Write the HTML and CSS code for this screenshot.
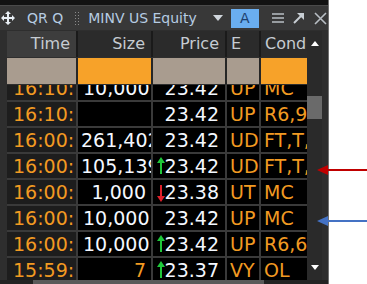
FILE: index.html
```html
<!DOCTYPE html>
<html lang="en">
<head>
    <meta charset="UTF-8">
    <meta name="viewport" content="width=device-width, initial-scale=1.0">
    <title>MINV US Equity - QR</title>
    <link rel="stylesheet" href="styles.css">
</head>
<body>
    <div class="window">
        <div class="top-edge"></div>

        <!-- Title bar -->
        <div class="titlebar">
            <svg class="move-icon" width="14" height="14" viewBox="0 0 14 14">
                <path d="M7 0 L10 3 H8 V6 H11 V4 L14 7 L11 10 V8 H8 V11 H10 L7 14 L4 11 H6 V8 H3 V10 L0 7 L3 4 V6 H6 V3 H4 Z" fill="#e8eef4"/>
            </svg>
            <span class="cmd">QR Q</span>
            <span class="grip"></span>
            <span class="security">MINV US Equity</span>
            <svg class="dropdown" width="10" height="6" viewBox="0 0 10 6">
                <path d="M0 0 H10 L5 6 Z" fill="#d0d6dc"/>
            </svg>
            <span class="btn-a">A</span>
            <svg class="tool" width="12" height="10" viewBox="0 0 12 10">
                <path d="M0 1 H12 M0 5 H12 M0 9 H12" stroke="#b8bec4" stroke-width="1.6"/>
            </svg>
            <svg class="tool" width="12" height="12" viewBox="0 0 12 12">
                <path d="M1 11 L10 2" stroke="#c8ced4" stroke-width="2"/>
                <path d="M4 1 H11 V8 Z" fill="#c8ced4"/>
            </svg>
            <svg class="tool" width="13" height="13" viewBox="0 0 13 13">
                <path d="M1 1 L12 12 M12 1 L1 12" stroke="#b8bec4" stroke-width="1.6"/>
            </svg>
        </div>

        <div class="panel">
            <div class="table">
                <div class="row head">
                    <div class="hcell sorted">Time</div>
                    <div class="hcell">Size</div>
                    <div class="hcell">Price</div>
                    <div class="hcell left">E</div>
                    <div class="hcell left">Cond</div>
                </div>
                <div class="row filter">
                    <div class="fcell"></div>
                    <div class="fcell on"></div>
                    <div class="fcell"></div>
                    <div class="fcell"></div>
                    <div class="fcell on"></div>
                </div>
                <div class="rows">
                    <div class="rows-inner">
                        <div class="row trade">
                            <div class="cell time">16:10:</div>
                            <div class="cell size">10,000</div>
                            <div class="cell price">23.42</div>
                            <div class="cell exch">UP</div>
                            <div class="cell cond">MC</div>
                        </div>
                        <div class="row trade">
                            <div class="cell time">16:10:</div>
                            <div class="cell size"></div>
                            <div class="cell price">23.42</div>
                            <div class="cell exch">UP</div>
                            <div class="cell cond">R6,9</div>
                        </div>
                        <div class="row trade">
                            <div class="cell time">16:00:</div>
                            <div class="cell size over">261,402</div>
                            <div class="cell price">23.42</div>
                            <div class="cell exch">UD</div>
                            <div class="cell cond">FT,T,</div>
                        </div>
                        <div class="row trade">
                            <div class="cell time">16:00:</div>
                            <div class="cell size over">105,139</div>
                            <div class="cell price"><span class="tick up"></span>23.42</div>
                            <div class="cell exch">UD</div>
                            <div class="cell cond">FT,T,</div>
                        </div>
                        <div class="row trade">
                            <div class="cell time">16:00:</div>
                            <div class="cell size">1,000</div>
                            <div class="cell price"><span class="tick down"></span>23.38</div>
                            <div class="cell exch">UT</div>
                            <div class="cell cond">MC</div>
                        </div>
                        <div class="row trade">
                            <div class="cell time">16:00:</div>
                            <div class="cell size">10,000</div>
                            <div class="cell price">23.42</div>
                            <div class="cell exch">UP</div>
                            <div class="cell cond">MC</div>
                        </div>
                        <div class="row trade">
                            <div class="cell time">16:00:</div>
                            <div class="cell size">10,000</div>
                            <div class="cell price"><span class="tick up"></span>23.42</div>
                            <div class="cell exch">UP</div>
                            <div class="cell cond">R6,6</div>
                        </div>
                        <div class="row trade">
                            <div class="cell time">15:59:</div>
                            <div class="cell size odd">7</div>
                            <div class="cell price"><span class="tick up"></span>23.37</div>
                            <div class="cell exch">VY</div>
                            <div class="cell cond">OL</div>
                        </div>
                    </div>
                </div>
            </div>

            <div class="vscroll">
                <div class="arrow-up"></div>
                <div class="vthumb"></div>
                <div class="arrow-down"></div>
            </div>
        </div>

        <div class="hscroll">
            <div class="hthumb"></div>
        </div>
    </div>

    <!-- callout arrows -->
    <svg class="callout red" width="50" height="12" viewBox="0 0 50 12">
        <path d="M10 6 H50" stroke="#c00000" stroke-width="2"/>
        <path d="M0 6 L11 1 V11 Z" fill="#c00000"/>
    </svg>
    <svg class="callout blue" width="50" height="12" viewBox="0 0 50 12">
        <path d="M10 6 H50" stroke="#4472c4" stroke-width="2"/>
        <path d="M0 6 L11 1 V11 Z" fill="#4472c4"/>
    </svg>
</body>
</html>
```

FILE: styles.css
```css
body {
    margin: 0;
    background-color: #ffffff;
    font-family: "DejaVu Sans", Verdana, sans-serif;
    position: relative;
    width: 367px;
    height: 284px;
    overflow: hidden;
}
.window {
    width: 328px;
    height: 284px;
    background-color: #2e2e2e;
    border-right: 1px solid #707070;
    display: flex;
    flex-direction: column;
}
.top-edge {
    height: 5px;
    background-color: #121212;
    border-bottom: 1px solid #4a4a4a;
}
.titlebar {
    height: 24px;
    background-color: #383838;
    display: flex;
    align-items: center;
    font-size: 14px;
    color: #b6cce2;
}
.move-icon {
    margin-left: 1px;
}
.cmd {
    margin-left: 12px;
}
.grip {
    width: 7px;
    height: 15px;
    margin-left: 11px;
    background-image: radial-gradient(#8a8a8a 0.8px, transparent 1px);
    background-size: 3px 3px;
}
.security {
    margin-left: 7px;
}
.dropdown {
    margin-left: 16px;
}
.btn-a {
    width: 28px;
    height: 19px;
    margin-left: 8px;
    background-color: #6aaef0;
    color: #1d3f6e;
    text-align: center;
    line-height: 19px;
}
.tool {
    margin-left: 9px;
}
.btn-a + .tool {
    margin-left: 13px;
}
.panel {
    flex: 1;
    display: flex;
    min-height: 0;
    padding-top: 1px;
}
.table {
    padding-left: 7px;
    display: flex;
    flex-direction: column;
    row-gap: 1px;
}
.row {
    display: grid;
    grid-template-columns: 69px 73px 72px 32px 46px;
    column-gap: 2px;
}
.head {
    height: 26px;
    background-color: #1a1a1a;
}
.hcell {
    background-color: #2b2b2b;
    color: #c6ccd2;
    font-size: 16px;
    line-height: 26px;
    text-align: right;
    padding-right: 6px;
    overflow: hidden;
    white-space: nowrap;
}
.hcell.sorted {
    background-color: #3d3d3d;
}
.hcell.left {
    text-align: left;
    padding: 0 0 0 4px;
}
.filter {
    height: 26px;
    background-color: #262626;
}
.fcell {
    background-color: #a99c8f;
}
.fcell.on {
    background-color: #f7a229;
}
.rows {
    height: 195px;
    overflow: hidden;
    background-color: #3a3a3a;
}
.rows-inner {
    margin-top: -9px;
    display: flex;
    flex-direction: column;
    row-gap: 2px;
}
.trade {
    height: 24px;
}
.cell {
    background-color: #000000;
    font-size: 19px;
    line-height: 24px;
    white-space: nowrap;
    overflow: hidden;
    padding: 0 5px;
    color: #f29a22;
}
.cell.time {
    background-color: #1d1d1d;
    padding-left: 6px;
}
.cell.size {
    color: #f4f8ff;
    text-align: right;
}
.cell.size.over {
    text-align: left;
    padding-left: 3px;
}
.cell.size.odd {
    color: #f29a22;
}
.cell.price {
    color: #f4f8ff;
    text-align: right;
    padding-right: 6px;
    position: relative;
}
.cell.exch {
    padding-left: 3px;
}
.cell.cond {
    padding-left: 3px;
}
.tick {
    position: absolute;
    left: 7px;
    top: 5px;
    width: 2px;
    height: 15px;
}
.tick.up {
    background-color: #1fc83a;
}
.tick.down {
    background-color: #e0202a;
}
.tick::before {
    content: "";
    position: absolute;
    left: -3px;
    border-left: 4px solid transparent;
    border-right: 4px solid transparent;
}
.tick.up::before {
    top: -2px;
    border-bottom: 6px solid #1fc83a;
}
.tick.down::before {
    bottom: -2px;
    border-top: 6px solid #e0202a;
}
.vscroll {
    width: 15px;
    display: flex;
    flex-direction: column;
    align-items: center;
    background-color: #2a2a2a;
}
.arrow-up {
    margin-top: 10px;
    border-left: 4px solid transparent;
    border-right: 4px solid transparent;
    border-bottom: 5px solid #ffffff;
}
.vthumb {
    width: 15px;
    height: 23px;
    margin-top: 50px;
    background-color: #6a6a6a;
}
.arrow-down {
    margin-top: auto;
    margin-bottom: 10px;
    border-left: 4px solid transparent;
    border-right: 4px solid transparent;
    border-top: 5px solid #ffffff;
}
.hscroll {
    height: 4px;
    background-color: #222222;
}
.hthumb {
    margin-left: 33px;
    width: 231px;
    height: 4px;
    background-color: #5a5a5a;
}
.callout {
    position: absolute;
    left: 317px;
}
.callout.red {
    top: 164px;
}
.callout.blue {
    top: 215px;
}
```
